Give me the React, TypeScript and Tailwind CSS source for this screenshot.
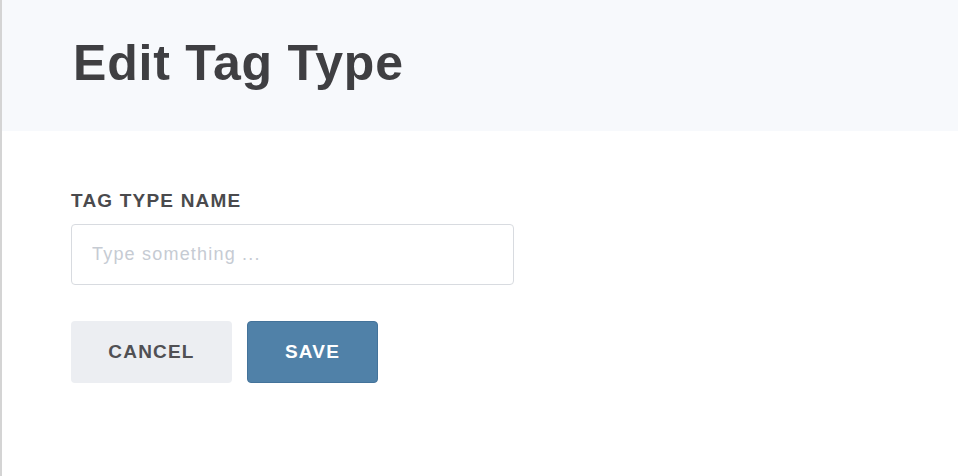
export default function App() {
  return (
    <div
      className="flex h-[476px] w-[958px] flex-col overflow-hidden border-l-2 border-[#d4d4d4] bg-white text-[#444]"
      style={{ fontFamily: '"Liberation Sans", Arial, sans-serif' }}
    >
      <header className="h-[131px] shrink-0 bg-[#f7f9fc] pl-[71px] pt-[38px]">
        <h1 className="text-[50px] font-bold leading-none tracking-[0.8px] text-[#3f3f42]">Edit Tag Type</h1>
      </header>

      <form className="flex flex-col pl-[69px] pt-[60px]">
        <label className="mb-[14px] text-[19px] font-bold uppercase leading-none tracking-[1.2px] text-[#4a4a4d]">
          Tag Type Name
        </label>
        <input
          type="text"
          placeholder="Type something ..."
          className="h-[61px] w-[443px] rounded-[4px] border border-[#d8dbe0] px-5 text-[18px] tracking-[1.2px] text-[#444] outline-none placeholder:text-[#c6cbd3]"
        />
        <div className="mt-[36px] flex gap-[15px]">
          <button
            type="button"
            className="h-[62px] w-[161px] rounded-[4px] bg-[#eceef2] text-[19px] font-bold uppercase tracking-[1.2px] text-[#505054]"
          >
            Cancel
          </button>
          <button
            type="button"
            className="h-[62px] w-[131px] rounded-[4px] border border-[#44739a] bg-[#5081a8] text-[19px] font-bold uppercase tracking-[1.2px] text-white"
          >
            Save
          </button>
        </div>
      </form>
    </div>
  )
}
